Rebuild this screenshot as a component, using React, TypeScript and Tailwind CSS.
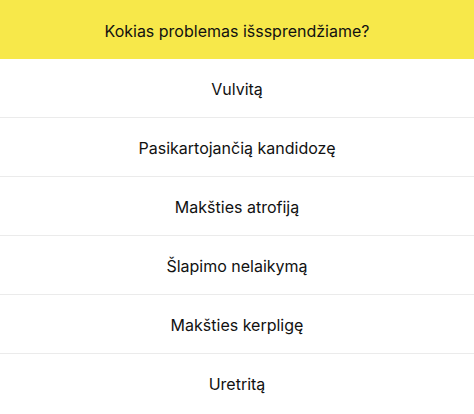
export default function App() {
  const items = [
    "Vulvitą",
    "Pasikartojančią kandidozę",
    "Makšties atrofiją",
    "Šlapimo nelaikymą",
    "Makšties kerpligę",
    "Uretritą",
  ];
  return (
    <div className="w-[474px] h-[414px] bg-white flex flex-col" style={{ fontFamily: "Inter, 'Noto Sans', sans-serif" }}>
      <div className="h-[59px] bg-[#f7e84a] flex items-center justify-center text-[16px] text-[#111] pt-[2px]">
        Kokias problemas išssprendžiame?
      </div>
      {items.map((t, i) => (
        <div
          key={t}
          className={
            i < items.length - 1
              ? "h-[59px] flex items-center justify-center border-b border-[#ebebeb] text-[16px] text-[#111] pt-[1px]"
              : "h-[59px] flex items-center justify-center text-[16px] text-[#111] pt-[1px]"
          }
        >
          {t}
        </div>
      ))}
    </div>
  );
}
